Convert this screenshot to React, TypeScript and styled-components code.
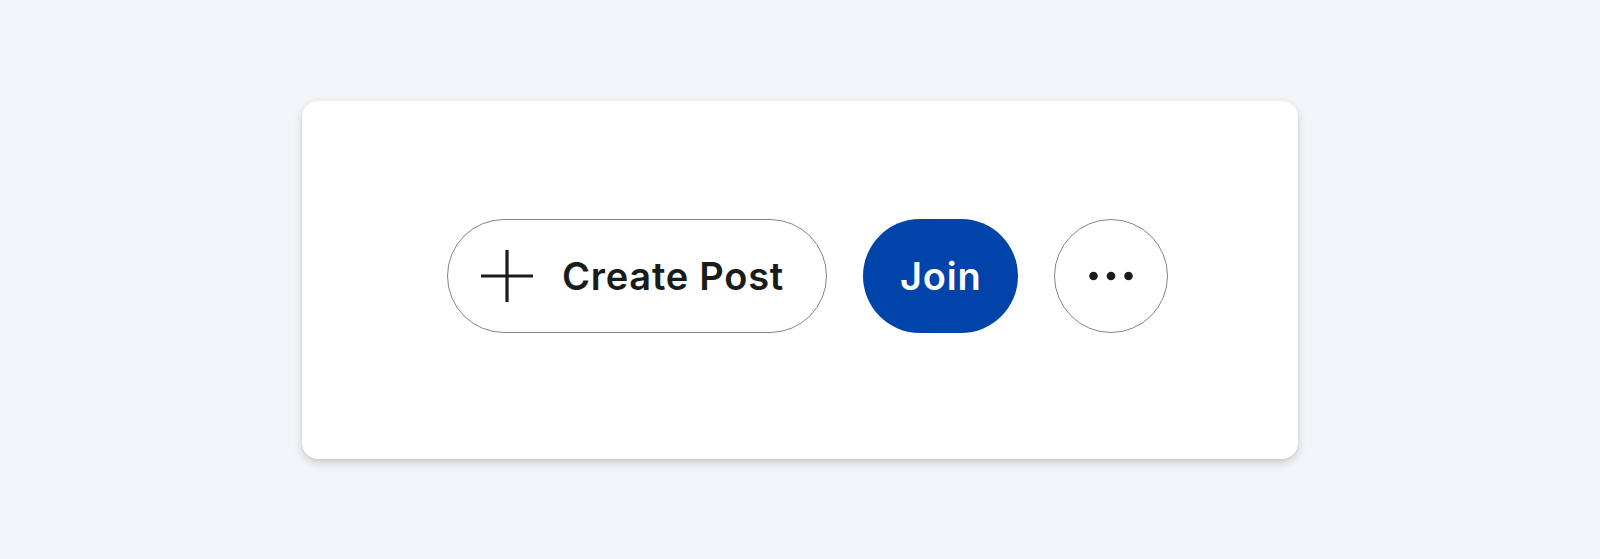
import React from 'react';
import styled, { createGlobalStyle } from 'styled-components';

const GlobalStyle = createGlobalStyle`
  html, body {
    margin: 0;
    padding: 0;
  }
  body {
    background: #f4f5f9;
    font-family: Inter, "Noto Sans", "Liberation Sans", sans-serif;
  }
`;

const Page = styled.div`
  min-height: 100vh;
  display: flex;
  align-items: center;
  justify-content: center;
`;

const Card = styled.div`
  width: 996px;
  height: 358px;
  box-sizing: border-box;
  padding: 118px 0 0 145px;
  background: #ffffff;
  border-radius: 16px;
  box-shadow: 0 4px 10px rgba(0, 0, 0, 0.16), 0 1px 3px rgba(0, 0, 0, 0.06);
  display: flex;
  align-items: flex-start;
`;

const Actions = styled.div`
  display: flex;
  align-items: center;
  gap: 36px;
`;

const PillButton = styled.button<{ $primary?: boolean }>`
  height: 114px;
  box-sizing: border-box;
  display: inline-flex;
  align-items: center;
  gap: 29px;
  padding: 0 37px;
  border-radius: 57px;
  border: ${(p) => (p.$primary ? '0' : '1px solid #858585')};
  background: ${(p) => (p.$primary ? '#0043a9' : '#ffffff')};
  color: ${(p) => (p.$primary ? '#ffffff' : '#181d1c')};
  font-family: inherit;
  font-size: 38px;
  font-weight: 600;
  letter-spacing: 0.02em;
  cursor: pointer;
`;

const CreateButton = styled(PillButton)`
  padding: 0 42px 0 33px;
`;

const IconButton = styled.button`
  width: 114px;
  height: 114px;
  box-sizing: border-box;
  border-radius: 50%;
  border: 1px solid #858585;
  background: #ffffff;
  display: inline-flex;
  align-items: center;
  justify-content: center;
  padding: 0;
  cursor: pointer;
  color: #181d1c;
`;

const PlusIcon = () => (
  <svg width="52" height="52" viewBox="0 0 52 52" aria-hidden="true">
    <path d="M0 26H52M26 0V52" stroke="#181d1c" strokeWidth="3.2" fill="none" />
  </svg>
);

const DotsIcon = () => (
  <svg width="44" height="10" viewBox="0 0 44 10" aria-hidden="true">
    <circle cx="4.5" cy="5" r="4.3" fill="currentColor" />
    <circle cx="22" cy="5" r="4.3" fill="currentColor" />
    <circle cx="39.5" cy="5" r="4.3" fill="currentColor" />
  </svg>
);

export default function App() {
  return (
    <>
      <GlobalStyle />
      <Page>
        <Card>
          <Actions>
            <CreateButton>
              <PlusIcon />
              Create Post
            </CreateButton>
            <PillButton $primary>Join</PillButton>
            <IconButton aria-label="More">
              <DotsIcon />
            </IconButton>
          </Actions>
        </Card>
      </Page>
    </>
  );
}
